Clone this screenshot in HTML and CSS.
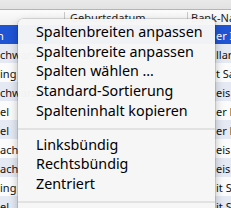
FILE: index.html
```html
<!DOCTYPE html>
<html lang="de">
<head>
<meta charset="utf-8">
<title>Kontextmenü</title>
<link rel="stylesheet" href="styles.css">
</head>
<body>
<div class="window">
  <div class="toolbar"></div>
  <div class="table">
    <div class="thead">
      <div class="th c1"></div>
      <div class="th c2">Geburtsdatum</div>
      <div class="th c3">Bank-Name</div>
    </div>
    <div class="row sel"><div class="td c1 cut">n</div><div class="td c2"></div><div class="td c3">er Institut</div></div>
    <div class="row odd"><div class="td c1">chwarz</div><div class="td c2"></div><div class="td c3">llar Bank</div></div>
    <div class="row"><div class="td c1">ing</div><div class="td c2"></div><div class="td c3">t Sachsen</div></div>
    <div class="row odd"><div class="td c1">chwarz</div><div class="td c2"></div><div class="td c3">eis Bank</div></div>
    <div class="row"><div class="td c1">el</div><div class="td c2"></div><div class="td c3">er Kasse</div></div>
    <div class="row odd"><div class="td c1">el</div><div class="td c2"></div><div class="td c3">er Kasse</div></div>
    <div class="row"><div class="td c1">ach</div><div class="td c2"></div><div class="td c3">eis Bank</div></div>
    <div class="row odd"><div class="td c1">ach</div><div class="td c2"></div><div class="td c3">eis Bank</div></div>
    <div class="row"><div class="td c1">ing</div><div class="td c2"></div><div class="td c3">it Spar</div></div>
    <div class="row odd"><div class="td c1">el</div><div class="td c2"></div><div class="td c3">it Spar</div></div>
  </div>
  <div class="menu">
    <div class="item">Spaltenbreiten anpassen</div>
    <div class="item">Spaltenbreite anpassen</div>
    <div class="item">Spalten wählen …</div>
    <div class="item">Standard-Sortierung</div>
    <div class="item">Spalteninhalt kopieren</div>
    <div class="sep"></div>
    <div class="item">Linksbündig</div>
    <div class="item">Rechtsbündig</div>
    <div class="item">Zentriert</div>
    <div class="sep"></div>
  </div>
</div>
</body>
</html>
```

FILE: styles.css
```css
html, body {
  margin: 0;
  padding: 0;
  background: #ffffff;
}

.window {
  position: relative;
  width: 231px;
  height: 208px;
  overflow: hidden;
  font-family: "Noto Sans", "DejaVu Sans", sans-serif;
  color: #1a1a1a;
}

.toolbar {
  height: 9px;
  background: linear-gradient(#e9e9e9, #e2e2e2);
  border-bottom: 1px solid #b4b4b4;
}

.table {
  display: flex;
  flex-direction: column;
}

.thead {
  display: grid;
  grid-template-columns: 64px 123px 1fr;
  height: 15px;
  background: linear-gradient(#fbfbfb, #f0f0f0);
  font-size: 11px;
  line-height: 13px;
  color: #222222;
}

.th {
  white-space: nowrap;
  overflow: hidden;
}

.th.c2 {
  border-left: 1px solid #c8c8c8;
  padding-left: 5px;
  margin-top: 2px;
  line-height: 11px;
}

.th.c3 {
  border-left: 1px solid #c8c8c8;
  padding-left: 3px;
  margin-top: 2px;
  line-height: 11px;
}

.row {
  display: grid;
  grid-template-columns: 64px 123px 1fr;
  height: 19px;
  box-sizing: border-box;
  padding-top: 2px;
  font-size: 11px;
  line-height: 17px;
  background: #fbfbfb;
  color: #111111;
}

.row.odd {
  background: #e4e9f3;
}

.row.sel {
  background: #1f54d4;
  color: #ffffff;
}

.td {
  white-space: nowrap;
  overflow: hidden;
}

.td.c3 {
  padding-left: 29px;
}

.td.cut {
  text-indent: -3px;
}

.menu {
  position: absolute;
  left: 18px;
  top: 19px;
  width: 197px;
  padding: 3px 0 12px;
  background: rgba(246, 246, 246, 0.98);
  border-radius: 5px;
  box-shadow: 0 0 0 0.5px rgba(0, 0, 0, 0.22), 0 4px 10px rgba(0, 0, 0, 0.28);
  font-size: 14.3px;
  line-height: 19.7px;
  color: #000000;
}

.item {
  padding-left: 18px;
  white-space: nowrap;
}

.sep {
  height: 2px;
  margin: 7px 0 5px;
  background: #e2e2e2;
}
```
